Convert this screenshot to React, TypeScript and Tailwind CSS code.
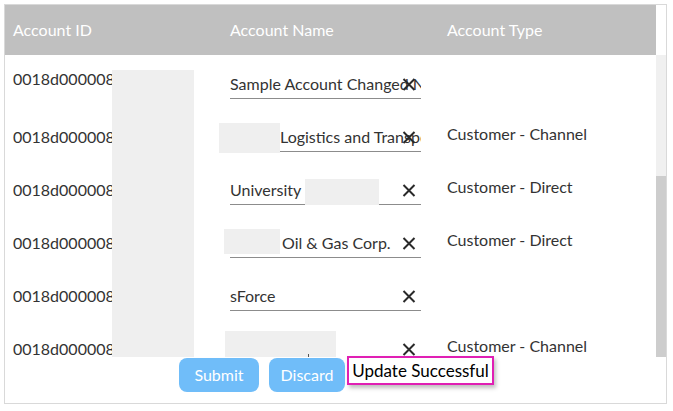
const rows = [
  { name: "Sample Account Changed Name", pad: "", type: "" },
  { name: "Logistics and Transportation", pad: "pl-[50px]", type: "Customer - Channel" },
  { name: "University", pad: "", type: "Customer - Direct" },
  { name: "Oil & Gas Corp.", pad: "pl-[52px]", type: "Customer - Direct" },
  { name: "sForce", pad: "", type: "" },
  { name: "", pad: "", type: "Customer - Channel" },
];

// redaction patches, per row, relative to the row box
const patches: Record<number, string> = {
  1: "left-[214px] top-[15px] w-[61px] h-[30px]",
  2: "left-[300px] top-[18px] w-[74px] h-[26px]",
  3: "left-[219px] top-[15px] w-[56px] h-[25px]",
  5: "left-[220px] top-[11px] w-[111px] h-[30px]",
};

function ClearIcon() {
  return (
    <svg width="14" height="13" viewBox="0 0 14 13" className="absolute right-[5px] top-[9px]">
      <path d="M1.5 1 L12.5 12 M12.5 1 L1.5 12" stroke="#2a2a2a" strokeWidth="2" fill="none" />
    </svg>
  );
}

export default function App() {
  return (
    <div className="pt-[4px] pl-[4px] bg-white min-h-screen" style={{ fontFamily: "Lato, 'Open Sans', sans-serif" }}>
      <div className="w-[663px] h-[400px] border border-[#d9d9d9] flex flex-col">
        {/* header */}
        <div className="flex h-[50px]">
          <div className="w-[651px] bg-[#c0c0c0] grid grid-cols-[217px_217px_217px] items-center text-white text-[16px]">
            <div className="pl-[8px]">Account ID</div>
            <div className="pl-[8px]">Account Name</div>
            <div className="pl-[8px]">Account Type</div>
          </div>
          <div className="w-[10px] bg-white" />
        </div>

        {/* body */}
        <div className="flex h-[302px]">
          <div className="w-[651px] relative overflow-hidden text-[16px] text-[#333]">
            {rows.map((r, i) => (
              <div key={i} className="relative h-[53px] pt-[5px] grid grid-cols-[217px_217px_217px] items-center">
                <div className={"pl-[8px] whitespace-nowrap " + (i === 0 ? "mb-[10px]" : "")}>0018d000008</div>
                <div className="pl-[8px]">
                  <div className="relative w-[191px] h-[30px] border-b border-[#8c8c8c] flex items-center">
                    <div className={"overflow-hidden whitespace-nowrap w-full " + r.pad}>{r.name}</div>
                    <ClearIcon />
                  </div>
                </div>
                <div className="pl-[8px] whitespace-nowrap mb-[6px]">{r.type}</div>
                {patches[i] && <div className={"absolute bg-[#efefef] " + patches[i]} />}
                {i === 5 && <div className="absolute left-[303px] top-[34px] w-[1px] h-[3px] bg-[#555]" />}
              </div>
            ))}
            <div className="absolute left-[107px] top-[15px] w-[82px] h-[287px] bg-[#efefef]" />
          </div>
          <div className="w-[10px] flex flex-col">
            <div className="h-[121px] bg-[#f0f0f0]" />
            <div className="flex-1 bg-[#cdcdcd]" />
          </div>
        </div>

        {/* footer */}
        <div className="flex-1 flex justify-center items-start pt-[1px] pl-[2px]">
          <button className="h-[34px] w-[80px] rounded-[8px] bg-[#70bdf9] text-white text-[16px]">Submit</button>
          <button className="ml-[10px] h-[34px] w-[76px] rounded-[8px] bg-[#70bdf9] text-white text-[16px]">Discard</button>
          <div className="ml-[2px] -mt-[2px] h-[29px] w-[147px] border-2 border-[#e01fb4] shadow-[2px_3px_4px_rgba(0,0,0,0.25)] text-black text-[17px] leading-[24px] flex items-center justify-center whitespace-nowrap">
            Update Successful
          </div>
        </div>
      </div>
    </div>
  );
}
